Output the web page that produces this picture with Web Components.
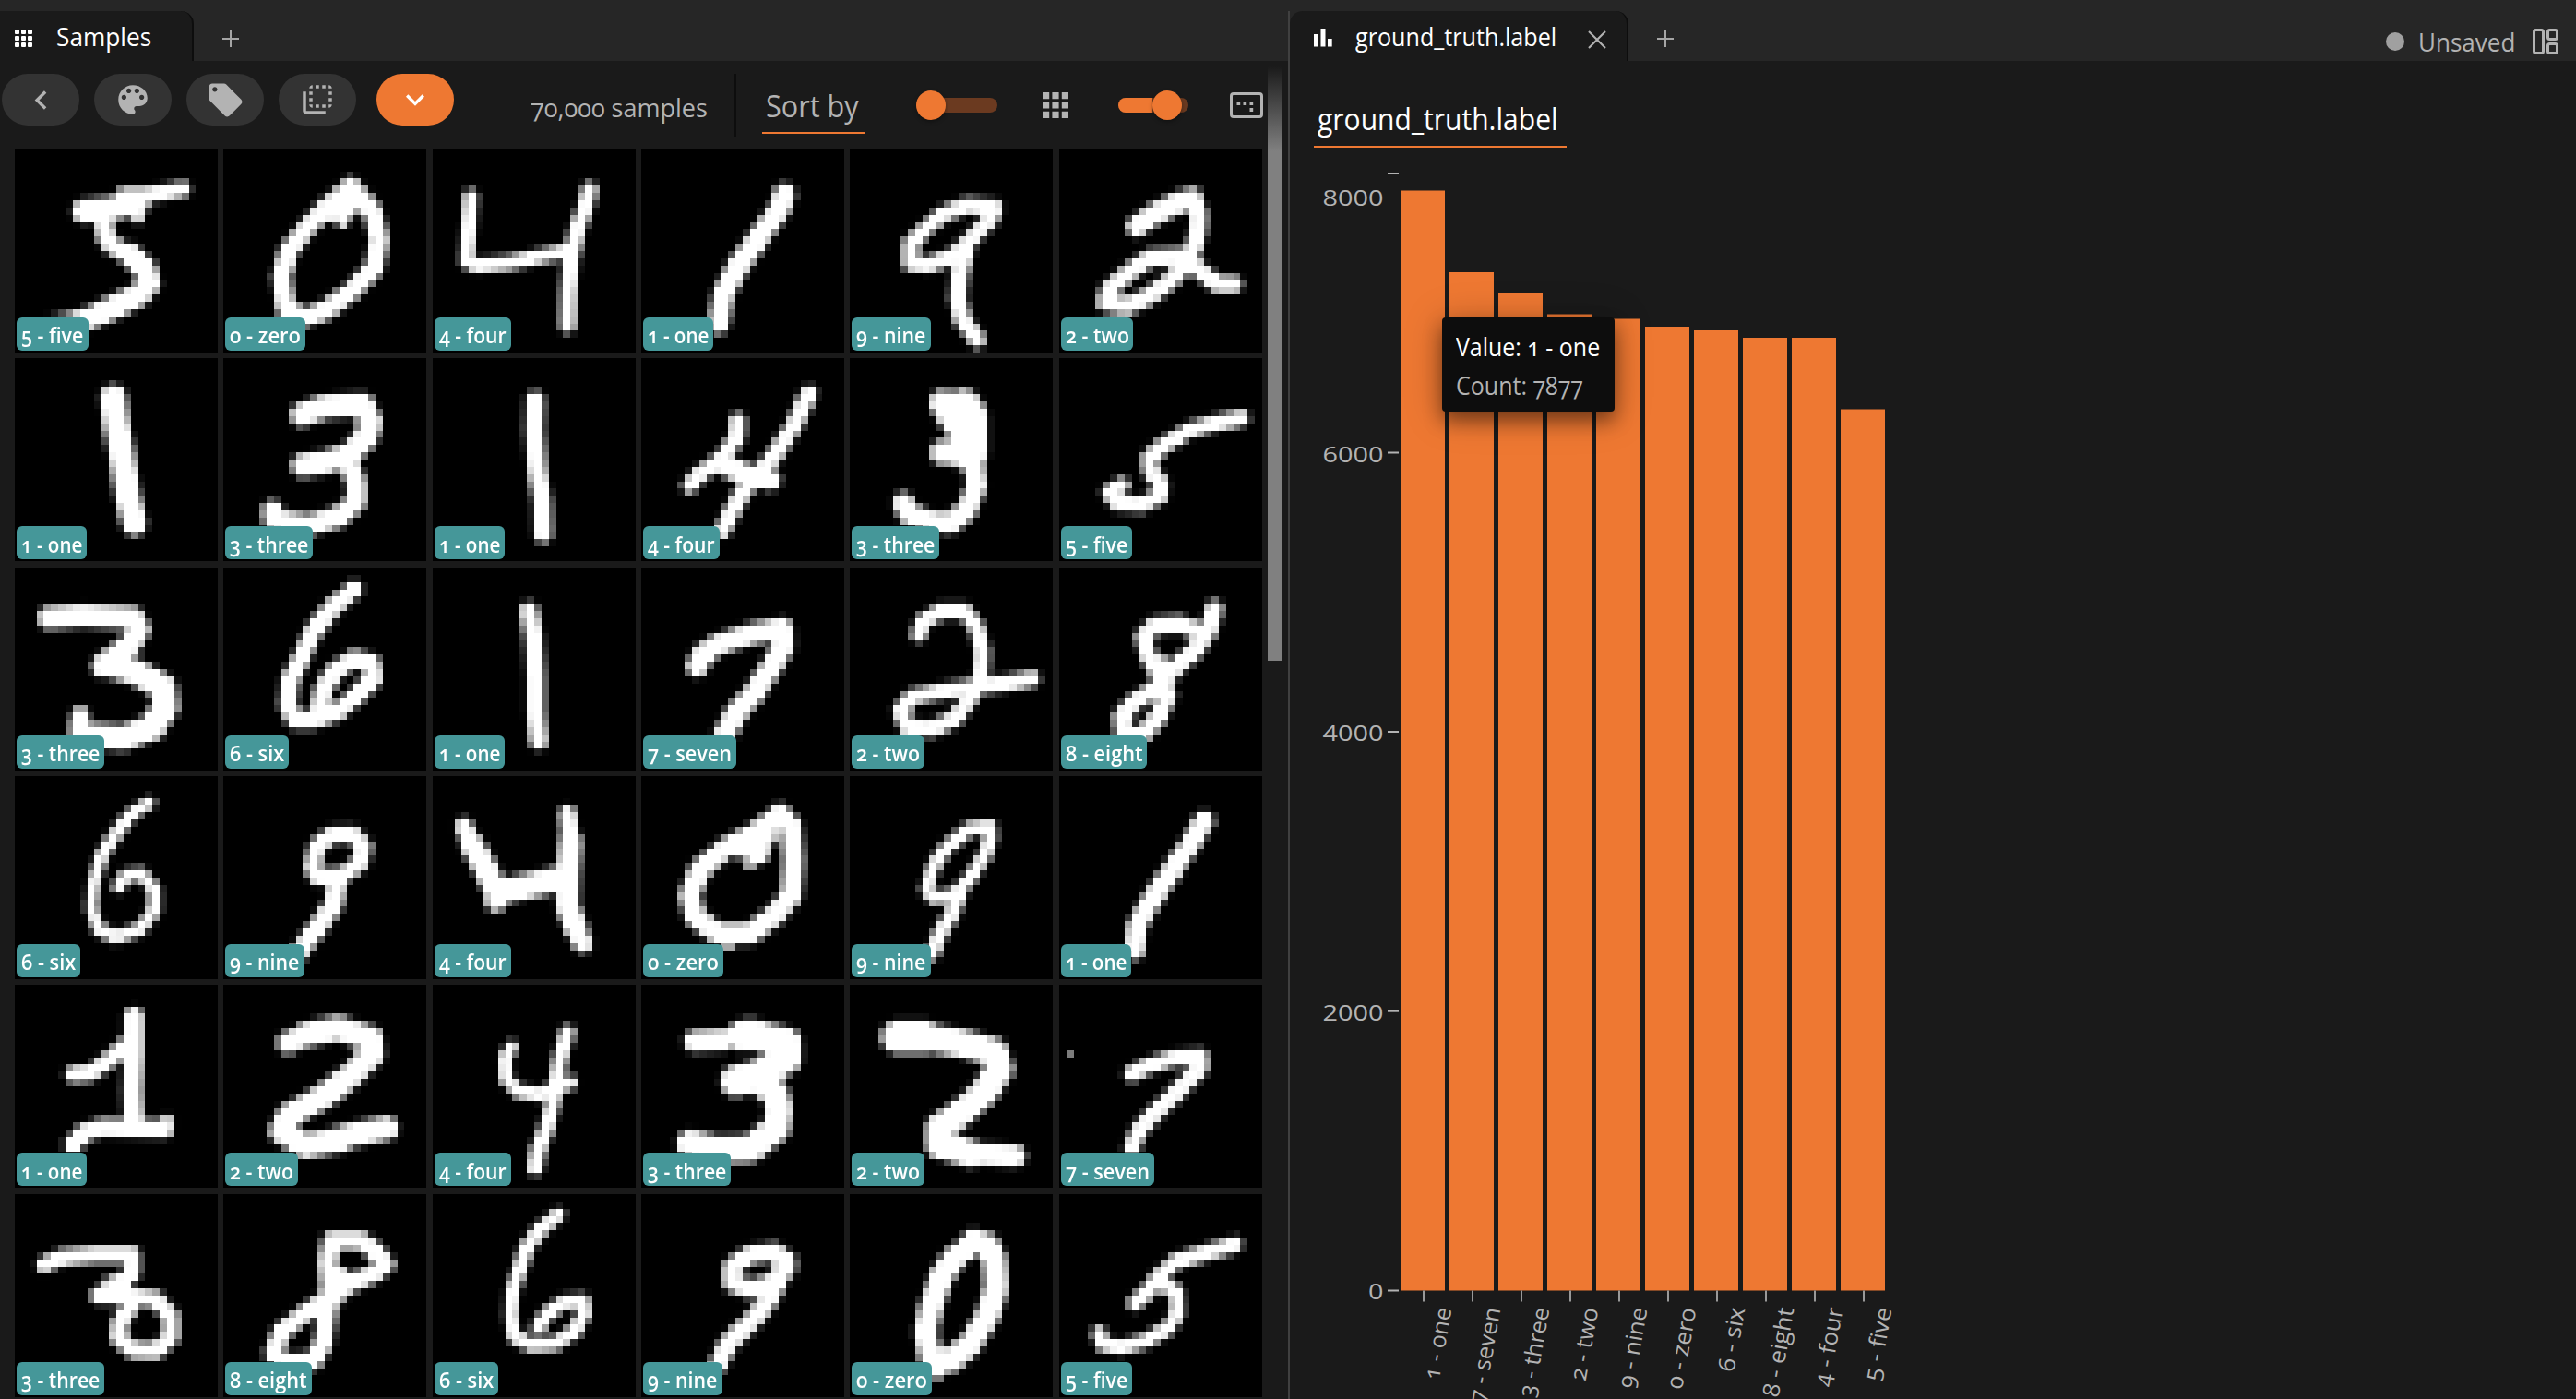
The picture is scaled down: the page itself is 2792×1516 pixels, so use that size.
<!DOCTYPE html>
<html lang="en">
<head>
<meta charset="utf-8">
<title>Samples</title>
<style>
html,body{margin:0;height:100%;background:#1a1a1a;overflow:hidden}
body{font-family:"Open Sans","Noto Sans",sans-serif;font-variant-numeric:oldstyle-nums;color:#b3b3b3}
</style>
</head>
<body>
<app-shell></app-shell>
<script>
const define=(name,html,setup)=>{
  const t=document.createElement('template');t.innerHTML=html;
  customElements.define(name,class extends HTMLElement{
    connectedCallback(){
      if(this.shadowRoot)return;
      const r=this.attachShadow({mode:'open'});
      r.appendChild(t.content.cloneNode(true));
      if(setup)setup(this,r);
    }
  });
};

/* Text set to an exact width: w = width, s = font size. */
define('fit-text',`<style>:host{display:block;flex:none;white-space:nowrap;line-height:1.36;overflow:visible}
span{display:inline-block;transform-origin:0 50%}</style><span></span>`,(el,r)=>{
  const s=r.querySelector('span');
  el.style.fontSize=el.getAttribute('s')+'px';
  s.textContent=el.getAttribute('t');
  const w=+el.getAttribute('w');
  el.style.width=w+'px';
  s.style.transform=`scaleX(${w/s.offsetWidth})`;
});

const ICONS={
  left:['0 0 24 24','<path d="M15.41 7.41 14 6l-6 6 6 6 1.41-1.41L10.83 12z"/>'],
  down:['0 0 24 24','<path d="M16.59 8.59 12 13.17 7.41 8.59 6 10l6 6 6-6z"/>'],
  palette:['0 0 24 24','<path d="M12 3c-4.97 0-9 4.03-9 9s4.03 9 9 9c.83 0 1.500-.67 1.500-1.500 0-.39-.15-.74-.39-1.010-.23-.26-.38-.61-.38-.99 0-.83.67-1.500 1.500-1.500H16c2.760 0 5-2.240 5-5 0-4.420-4.030-8-9-8zm-5.500 9c-.83 0-1.500-.67-1.500-1.500S5.670 9 6.500 9 8 9.670 8 10.500 7.330 12 6.500 12zm3-4C8.670 8 8 7.330 8 6.500S8.670 5 9.500 5s1.500.67 1.500 1.500S10.330 8 9.500 8zm5 0c-.83 0-1.500-.67-1.500-1.500S13.670 5 14.500 5s1.500.67 1.500 1.500S15.330 8 14.500 8zm3 4c-.83 0-1.500-.67-1.500-1.500S16.670 9 17.500 9s1.500.67 1.500 1.500-.67 1.500-1.500 1.500z"/>'],
  tag:['0 0 24 24','<path d="M21.410 11.580l-9-9C12.050 2.220 11.550 2 11 2H4c-1.100 0-2 .9-2 2v7c0 .55.22 1.050.59 1.420l9 9c.36.36.86.58 1.410.58.55 0 1.050-.22 1.410-.59l7-7c.37-.36.59-.86.59-1.410 0-.55-.23-1.060-.59-1.420zM5.500 7C4.670 7 4 6.330 4 5.500S4.670 4 5.500 4 7 4.670 7 5.500 6.330 7 5.500 7z"/>'],
  patches:['0 0 24 24','<path d="M9 7H7v2h2V7zm0 4H7v2h2v-2zm0-8c-1.110 0-2 .9-2 2h2V3zm4 12h-2v2h2v-2zm6-12v2h2c0-1.100-.9-2-2-2zm-6 0h-2v2h2V3zM9 17v-2H7c0 1.100.89 2 2 2zm10-4h2v-2h-2v2zm0-4h2V7h-2v2zm0 8c1.100 0 2-.9 2-2h-2v2zM5 7H3v12c0 1.100.89 2 2 2h12v-2H5V7zm10-2h2V3h-2v2zm0 12h2v-2h-2v2z"/>'],
  apps:['0 0 28 28','<path d="M0 0h7.200v7.200H0zM10.400 0h7.200v7.200h-7.200zM20.800 0H28v7.200h-7.200zM0 10.400h7.200v7.200H0zM10.400 10.400h7.200v7.200h-7.200zM20.800 10.400H28v7.200h-7.200zM0 20.800h7.200V28H0zM10.400 20.800h7.200V28h-7.200zM20.800 20.800H28V28h-7.200z"/>'],
  appsround:['0 0 19 19','<g><rect width="5" height="5" rx="1"/><rect x="7" width="5" height="5" rx="1"/><rect x="14" width="5" height="5" rx="1"/><rect y="7" width="5" height="5" rx="1"/><rect x="7" y="7" width="5" height="5" rx="1"/><rect x="14" y="7" width="5" height="5" rx="1"/><rect y="14" width="5" height="5" rx="1"/><rect x="7" y="14" width="5" height="5" rx="1"/><rect x="14" y="14" width="5" height="5" rx="1"/></g>'],
  bars:['0 0 20 20','<path d="M0 6h5v13.500H0zM7.500 0h5v19.500h-5zM15 11h4.700v8.500H15z"/>'],
  plus:['0 0 20 20','<path d="M9 1h2v8h8v2h-8v8H9v-8H1V9h8z"/>'],
  close:['0 0 20 20','<path d="M1 1 19 19M19 1 1 19" stroke="currentColor" stroke-width="2.100" fill="none"/>'],
  board:['0 0 28 28','<g fill="none" stroke="currentColor" stroke-width="3"><rect x="1.500" y="1.500" width="10" height="25" rx="2"/><rect x="16.500" y="1.500" width="10" height="10" rx="2"/><rect x="16.500" y="16.500" width="10" height="10" rx="2"/></g>'],
  fit:['0 0 36 28','<rect x="1.500" y="1.500" width="33" height="25" rx="2.500" fill="none" stroke="currentColor" stroke-width="3"/><path d="M7.500 10h3.700v4H7.500zM14.500 10h3.700v4h-3.700zM21.500 10h3.700v4h-3.700zM21.500 17h3.700v4h-3.700z"/>']
};
define('ui-icon',`<style>:host{display:block;flex:none}svg{display:block;width:100%;height:100%;fill:currentColor}</style>`,(el,r)=>{
  const [vb,body]=ICONS[el.getAttribute('name')];
  el.style.width=el.getAttribute('w')+'px';
  el.style.height=(el.getAttribute('h')||el.getAttribute('w'))+'px';
  r.innerHTML+=`<svg viewBox="${vb}" preserveAspectRatio="none">${body}</svg>`;
});

define('pill-button',`<style>:host{display:flex;flex:none;width:84px;height:56px;border-radius:28px;background:#333;color:#b3b3b3;align-items:center;justify-content:center}
:host([primary]){background:#ee7832;color:#fff}</style><slot></slot>`);

define('range-toggle',`<style>:host{display:flex;flex:none;height:32px;align-items:center;--on:0px}
.t{height:16px;border-radius:8px;background:#6b3a20;display:flex;align-items:center;flex:1}
.f{height:16px;border-radius:8px 0 0 8px;background:#ee7832;width:var(--on)}
.k{width:32px;height:32px;border-radius:50%;background:#ee7832;flex:none;box-shadow:0 2px 4px rgba(0,0,0,.35)}</style>
<div class="t"><div class="f"></div><div class="k"></div></div>`);

define('panel-tab',`<style>:host{display:flex;flex:none;box-sizing:border-box;height:54px;background:#1a1a1a;border-radius:0 14px 0 0;border-right:2px solid #0d0d0d;align-items:center;padding-top:4px;color:#fff;font-weight:500}
:host([round]){border-radius:14px 14px 0 0}</style><slot></slot>`);

/* Handwritten digits as strokes on a 28x28 grid: "width:x,y x,y ..." */
const INK={
a5:'3:9.5,8.5 13,8.2 17,7.3|1.8:15,6.300 18,6.300 21,5.900 23.2,5.500|1.500:17,9.300|2.200:12.2,9 12.600,12 13.500,13.300 15.700,14.500|2.900:15.900,14.500 18,16.500 18.500,18.500 17.200,20 14.300,21.400 11,23 8,24 5,24.600',
a0:'2.300:17.500,5 19.300,7 20.600,8.500 21.500,12.500 20.800,16.300 18,19.300 14,22.200 11.200,23.200 8.600,21.800 8,17.500 9,14 11.200,11.200 14,8.200 17,5.700|3:15.500,8 17.200,6.700|3:14.500,8.300 17,8|1.500:16.400,10',
a4:'1.700:5.300,6.500 5,11 4.700,15.300 6,16 10.700,15.600 15.300,14.600 19,13.900|1.900:21.600,5.600 21,8 19.900,11.200 19,15.400 18.700,19.700 18.600,24.300',
b1:'2.700:19.800,6.200 19.200,8 16.700,11.500 13.200,16.300 11.300,20 10.700,24',
a9:'1.900:20,8 16.100,7.700 12.900,8.900 10.400,11 8.400,13 8.400,15.700 11,15.900 14.400,14.600 16.900,12.200 19.400,9.600 20,8|2.100:15.900,14.200 15.200,17 14.900,20.500 15.600,23.600 17.600,26.200',
a2:'2.700:10.700,10.600 12.800,9.100 16,7.500 17.500,7|2.100:17,7 18.500,6.500 19.300,8.800 19.200,11.200 18.600,13.500 17.300,15.900 15,18.400 12,20.500 9.200,21.600 6.400,21.100 6.900,19.300 9.700,16.800 12.600,14.900 17.200,14.700 19.600,16.800 21.800,18.600 24.200,18.600',
c1:'3.200:13.600,5.400 14,9 14.800,13.400 15.600,19 16.500,22.800',
c3:'2.900:10.800,7.800 14,6.700 19.200,6.400 20.300,8.800 19.700,11 17.400,13.300 14,14.400 10.900,14.800|2.600:17.400,14.800 18.300,17.200 18.300,19.800 15.900,21.900 12,23 7,22.400 6.800,21',
d1:'2.200:14.100,5.800 14,10 14.400,15.500 15.100,19.800 15.200,24.300',
b4:'1.900:13.300,8.600 13.200,10.900 11.200,13.800 8,16 6.700,17.600|2.700:11,14.500 14.400,16 17.800,16.800|2:23.100,4.900 21.200,9 19,12.600 16.600,15.500 14,18.500 12.300,21.500 11.200,23.800',
d3:'3.400:12.900,6.200 14.800,9.300|5:15.600,6.900 16.400,8 16.400,13|3:12.800,13 14.500,13|2.600:17,13.500 17.500,17.600 16.100,21 13.800,22.800 11,22.500 8.200,21.500 7.400,20',
b5:'1.900:25.200,8.200 21.800,8.900 17.800,10 14.500,12 12.400,13.800 12.600,15.600 14,17.200 13.900,19 11.500,20.200 8,20 6.900,18.500 8.600,17.500',
e3:'2.800:4.700,6.900 9.300,6.600 16.300,6.900 17.200,8.500 16,10.500 13.500,12.500 12.100,13.600|3.300:13,13.300 16.700,14.400 20.500,16.500 20.800,19.300 19,22 15,23.500 10.500,23.200|2.300:8.700,22.200 9,20.500',
a6:'2.200:18,3 15.200,5.300 12.400,8.800 10.900,12.200 9.200,15.500 8.900,19 9.900,21 12.400,21 15.800,19.800 18.600,17.500 20.700,15.200 20.400,13.200 18,12.600 15.300,14.300 13.800,16.800 13.300,19.500',
e1:'2.100:13.300,5.900 13.900,9.500 14.200,15 14.200,20 14.600,24',
a7:'2.700:7.700,13.600 8.500,12 10.400,10.700 15,9.200 19.500,8.400 19.600,11 17.900,13.800 15.400,17.500 13,20.200 11.200,23.500',
b2:'1.900:9.500,9.200 10.100,7.400 12.700,6 15.800,6 17.600,8.300 18.300,11.700 18.100,15 16.700,18 14.400,20.900 11.500,22.200 8,22 7,19.800 8.600,17.800 13.200,17 18.400,16.300 21.900,15.900 25.200,15.300',
a8:'2.100:21.400,5.700 20.600,8.700 19,11.200 16,13.800 13.200,16.800 10.300,18.500 8.600,20.600 8.900,23 11.500,23 13.700,20.600 15,17.600 13.800,14.600 12.300,12.200 11.600,9.500 13.200,8 16.700,7.800 19,8.700|2.300:14,13.500 14,16',
b6:'1.500:18.500,3.700 15.900,5.400 13.600,8.400 11.900,11.300 10.900,14.700 10.600,18.200 11.500,21 13.900,22.200 17.300,21.100 19.300,18.500 19.300,15.600 17.500,13.500 15.300,13.700 14.300,15.200',
b9:'2:18.900,12 19.400,9.700 17.900,8 14.900,8.100 12.900,9.700 12.300,12.600 13,13.900 16.400,13.700 18.600,12.200|2.300:15.700,14 15.200,17.700 13.500,20.200 11.200,23.200 10.500,24.300',
d4:'2.200:4.300,7 5.500,9.500|3:5.500,9.500 7.600,13.400 9,16.400|2.600:8.700,17.300|3.200:9,16 14.200,14.900 18.100,14|2.100:18.600,5.200 18.900,8.500|2.900:19,9 18.700,13.500 18.600,18 19.800,21|2.400:19.800,21 20.700,23',
b0:'2.600:19.200,5.200 20.700,7 21,11.800 20.700,16.500 18.400,19.200 15,21.700 10.500,21.700 7.400,19.400 6.700,16.400 8,13 11.500,10 15.500,8 18.400,5.900|3.400:13.500,9.500 17,8|3:15.500,9 16.200,10.500|1.500:15,12|2:12,22.700',
c9:'1.600:19.300,7 16.400,7.300 13.500,9.700 11.500,12.600 10.600,15.600 11.600,16.800 14.400,16.400 16.700,13.900 18.700,10.900 19.400,8.400 19.300,7|1.700:15.200,16 14.100,19 12.400,21.900 11.300,24.600',
f1:'2.500:20,6.200 17.800,9.800 15.200,13.500 12.600,17.300 10.700,20.700 10.400,24',
g1:'2.500:16.400,4.400 16.400,9.200 16.200,14.700 16.400,19|2:8,12.400 10.500,12.200 12.800,10.600 15.300,8.300|2.200:8,22 9.500,20.400 12.200,19.700 20.700,19.900|1.600:21,18.900',
c2:'2.700:8.900,8 11.300,7|3.100:11.300,6.900 15.800,6 20.300,7.400 20.500,9.600 17.500,12.600 13.500,15.600 9.200,17.900 8,20.200 11.300,22.200 16.400,21.300|3:16.400,21 22.500,19.800',
e4:'1.600:10.900,8.600 10,10 10.100,13 11.900,14.700 14.700,15.100 17.500,14 19,13.500|1.800:18.600,6.600 17.600,10 16.700,15.600 15.700,19.800 14.500,22.800 14.100,25.300',
g3:'2.600:7.300,7.800 11.500,7.600|3.900:14,7 15,6.800 20,8 20,10.300 16,12.500 13,13.300|3.500:16,13 18.500,15 19,17 18.700,19.800 15,22.600 10.300,22.700 6.800,21.900',
d2:'4.200:6.600,7.200 10.400,7.200|3.500:10.400,7.200 15.500,8.100 20,9.300 20.700,11.700 18.400,15 15,17.900 12.300,19.800 12.300,22 16.700,23.300|2.700:16.700,23.300 22.800,23.600',
b7:'2:10,12.300 12,11.300 15.500,10.200 19.500,9.900 19.500,11.500 16.700,14.300 13.200,17.700 10.900,20.200 10,22.500|.5:1.500,9.500',
h3:'2:4,9.800 6.500,8.700 11,8.300 16.200,8.300 16.200,10.900 13.800,13 11.500,14|2.200:13.500,12.500 15,13.500|2:11.500,14 15.600,14.100 19.500,14.500 21.500,16.800 21.500,19.800 19.500,21.600 16.200,21.500 14.300,19.800 14.500,17.600 16,15.500',
b8:'2.200:14.900,6.400 19,6.400 21,7.900 22.400,9.700 20.900,10.900 17.500,12.400 14.500,14.300 11.300,16.400 8,19 6.900,21.900 8.400,23.200 12.400,23 13.800,20.600 14.300,16.400 14.700,13 14.400,9.200 14.900,6.400|3:16,11.700 15,14',
c6:'1.700:17.300,2.800 14.700,5 13,7.300 12,10.400 11,13.400 10.800,16.800 11.200,19.600 13.600,20.800 17,20.600 19.600,18.900 20.900,16.400 20.700,14.700 18.100,14.900 15.800,16.400 14.600,18.300',
d9:'2.200:20.200,9.200 18.400,7.900 15,8.300 12.500,10 12.500,12.200 15,13.100 17.800,12.400 20.100,10.400|2.400:19.500,9.500|2.300:18.900,12 17.200,15.200 15,17.700 12,20.600 10.600,23.400',
c0:'3:17,6.500 19,7 20,9 20.200,13 19,16.800 16.700,20.600 13.800,23 11.200,22.700 10.500,19 11.200,15.500 12.700,11.300 14.500,8.700|3:16,7.500|2:12,24.500',
c5:'1.900:24.300,6.900 20.700,7.900 16,9.300 13.900,11.300 12.300,13.400 10.400,15|1.700:13.800,12.200 16.200,13.500 16.300,16.400 15,18.500 12.100,20.200 8.500,21.100 6,20.700 5.500,19.200'
};
define('sample-tile',`<style>:host{display:flex;width:220px;height:220px;position:relative;background:#000}
canvas{width:220px;height:220px;image-rendering:pixelated;display:block}
.b{position:absolute;left:2px;bottom:2px;height:36px;box-sizing:border-box;padding:3px 5px 0;background:#459799;border-radius:6px;color:#fff;display:flex;align-items:center;font-weight:600}</style>
<canvas width="28" height="28"></canvas><div class="b"></div>`,(el,r)=>{
  const W={one:76,two:78.6,three:95,four:83,five:77.500,six:69,seven:101,eight:93.500,nine:85.500,zero:87};
  const label=el.getAttribute('label');
  r.querySelector('.b').innerHTML=`<fit-text t="${label}" s="24" w="${W[label.slice(4)]-10}"></fit-text>`;
  const segs=[];
  for(const part of INK[el.getAttribute('ink')].split('|')){
    const [w,p]=part.split(':'),pts=p.split(' ').map(q=>q.split(',').map(Number));
    if(pts.length===1)pts.push(pts[0]);
    for(let i=1;i<pts.length;i++)segs.push([(+w+.2)/2,...pts[i-1],...pts[i]]);
  }
  const cx=r.querySelector('canvas').getContext('2d'),im=cx.createImageData(28,28);
  for(let y=0;y<28;y++)for(let x=0;x<28;x++){
    let sum=0;
    for(let a=0;a<4;a++)for(let b=0;b<4;b++){
      const px=x+(a+.5)/4,py=y+(b+.5)/4;let v=0;
      for(const [h,x1,y1,x2,y2] of segs){
        const dx=x2-x1,dy=y2-y1,l=dx*dx+dy*dy;
        const t=l?Math.max(0,Math.min(1,((px-x1)*dx+(py-y1)*dy)/l)):0;
        v=Math.max(v,Math.min(1,Math.max(0,(h-Math.hypot(px-x1-t*dx,py-y1-t*dy))*2+.5)));
      }
      sum+=v;
    }
    const g=Math.min(255,sum/16*275),i=(y*28+x)*4;
    im.data[i]=im.data[i+1]=im.data[i+2]=g;im.data[i+3]=255;
  }
  cx.putImageData(im,0,0);
});

define('sample-grid',`<style>:host{display:grid;grid-template-columns:repeat(6,220px);grid-auto-rows:220px;gap:6.360px;padding-left:16px}</style>`,(el,r)=>{
  const N=['zero','one','two','three','four','five','six','seven','eight','nine'];
  const order='a5 a0 a4 b1 a9 a2 c1 c3 d1 b4 d3 b5 e3 a6 e1 a7 b2 a8 b6 b9 d4 b0 c9 f1 g1 c2 e4 g3 d2 b7 h3 b8 c6 d9 c0 c5';
  r.innerHTML+=order.split(' ').map(k=>`<sample-tile ink="${k}" label="${k[1]} - ${N[k[1]]}"></sample-tile>`).join('');
});

define('tool-bar',`<style>:host{display:flex;height:96px;box-sizing:border-box;align-items:flex-start;color:#b3b3b3;padding-top:14px}
:host>*{flex:none}
pill-button{margin:0 16px 0 0}
.n{margin:17px 0 0 83px}
.v{width:2px;height:68px;background:#0d0d0d;margin:0 0 0 29px}
.s{margin-left:28px;border-bottom:2px solid #ee7832;height:63px;display:flex;padding-left:4px;width:108px}</style>
<pill-button style="margin-left:2px"><ui-icon name="left" w="41"></ui-icon></pill-button>
<pill-button><ui-icon name="palette" w="42"></ui-icon></pill-button>
<pill-button><ui-icon name="tag" w="43"></ui-icon></pill-button>
<pill-button style="margin-right:22px"><ui-icon name="patches" w="42"></ui-icon></pill-button>
<pill-button primary style="margin-right:0"><ui-icon name="down" w="40"></ui-icon></pill-button>
<fit-text class="n" t="70,000 samples" s="28" w="192"></fit-text>
<div class="v"></div>
<div class="s"><fit-text t="Sort by" s="33" w="101" style="margin-top:13px"></fit-text></div>
<range-toggle style="width:88px;margin:18px 0 0 55px"></range-toggle>
<ui-icon name="apps" w="28" style="margin:20px 0 0 49px"></ui-icon>
<range-toggle style="width:76px;margin:18px 0 0 54px;--on:37px"></range-toggle>
<ui-icon name="fit" w="36" h="28" style="margin:20px 0 0 45px"></ui-icon>`);

define('samples-panel',`<style>:host{display:flex;flex-direction:column;width:1396px;height:1504px;flex:none}
.tabs{display:flex;height:54px;background:#262626;flex:none}
.main{display:flex;flex:1;min-height:0}
.c{width:1374px;flex:none;min-width:0}
.bar{width:16px;height:644px;margin-top:6px;flex:none;background:linear-gradient(#1a1a1a,#808080 92px)}
.w{width:16px;display:flex}</style>
<div class="tabs"><panel-tab style="width:210px"><ui-icon name="appsround" w="19" style="margin-left:16px"></ui-icon><fit-text t="Samples" s="27" w="103" style="margin:-1px 0 0 26px"></fit-text></panel-tab>
<ui-icon name="plus" w="20" style="margin:20px 0 0 30px;color:#a5a5a5"></ui-icon></div>
<div class="main"><div class="c"><tool-bar></tool-bar><sample-grid></sample-grid></div><div class="w"><div class="bar"></div></div></div>`);

define('bar-chart',`<style>:host{display:block;position:relative;width:1394px;height:1340px;overflow:hidden}
svg{display:block}text{fill:#b3b3b3}
.tip{position:absolute;left:165px;top:168px;width:187px;height:102px;box-sizing:border-box;background:#0d0d0d;border-radius:4px;padding:14px 15px 0;box-shadow:0 10px 20px rgba(0,0,0,.42),0 4px 40px rgba(0,0,0,.25);color:#b3b3b3}</style>
<div class="g"></div>
<div class="tip"><fit-text t="Value: 1 - one" s="27" w="156" style="color:#fff;font-weight:500"></fit-text><fit-text t="Count: 7877" s="27" w="138" style="margin-top:5px"></fit-text></div>`,(el,r)=>{
  /* Origin of the drawing is (1398,176) on the page. */
  const B=[['1 - one',206.500,79],['7 - seven',295,104],['3 - three',318,98],['2 - two',340.500,80],['9 - nine',345.500,88],['0 - zero',354,89],['6 - six',358,70],['8 - eight',366,98],['4 - four',366,86],['5 - five',443.500,80]];
  let s='<svg width="1394" height="1340" viewBox="1398 176 1394 1340" font-family="Open Sans,Noto Sans,sans-serif">';
  B.forEach(([n,y,l],i)=>{
    const x=1518+53*i,t=x+25;
    s+=`<rect x="${x}" y="${y}" width="48" height="${1398.500-y}" fill="#ee7832"/><rect x="${t-1}" y="1398.500" width="2" height="12" fill="#999"/>
<text transform="translate(${t+30.500},1418.500) rotate(-80)" text-anchor="end" font-size="25" textLength="${l}" lengthAdjust="spacingAndGlyphs">${n}</text>`;
  });
  [['8000',188.500,223],['6000',490.500,500.500],['4000',793,803],['2000',1095.700,1105.500],['0',1398.500,1408]].forEach(([n,y,b])=>{
    const w=n==='0'?16.500:66;
    s+=`<rect x="1504" y="${y-(n==='8000'?.5:1)}" width="12" height="${n==='8000'?1:2}" fill="#b3b3b3"/><text x="${1499.500-w}" y="${b}" font-size="24" style="font-variant-numeric:lining-nums" textLength="${w}" lengthAdjust="spacingAndGlyphs">${n}</text>`;
  });
  r.querySelector('.g').innerHTML=s+'</svg>';
});

define('histogram-panel',`<style>:host{display:flex;flex-direction:column;width:1394px;height:1504px;flex:none}
.tabs{display:flex;height:54px;background:#262626;flex:none}
.h{height:110px;flex:none;display:flex;padding-left:26px}
.t{width:270px;padding-left:4px;height:92px;border-bottom:2px solid #ee7832}
.u{margin:20px 0 0 auto;padding-right:19px;display:flex;color:#b3b3b3;align-items:flex-start}
.d{width:20px;height:20px;border-radius:50%;background:#a0a0a0;margin-top:3px}</style>
<div class="tabs"><panel-tab round style="width:367px"><ui-icon name="bars" w="20" style="margin-left:26px"></ui-icon><fit-text t="ground_truth.label" s="27" w="218" style="margin:-1px 0 0 25px"></fit-text><ui-icon name="close" w="20" style="margin:4px 0 0 34px;color:#b3b3b3"></ui-icon></panel-tab>
<ui-icon name="plus" w="20" style="margin:20px 0 0 30px;color:#a5a5a5"></ui-icon>
<div class="u"><div class="d"></div><fit-text t="Unsaved" s="28" w="105" style="margin:-6px 0 0 15px"></fit-text><ui-icon name="board" w="28" style="margin:-1px 0 0 19px"></ui-icon></div></div>
<div class="h"><div class="t"><fit-text t="ground_truth.label" s="32" w="261" style="color:#fff;font-weight:500;margin-top:41px"></fit-text></div></div>
<bar-chart></bar-chart>`);

define('app-shell',`<style>:host{display:flex;flex-direction:column;width:2792px;height:1516px;overflow:hidden;background:#1a1a1a}
.top{height:12px;background:#262626;flex:none}
.row{display:flex;flex:1;min-height:0}
.div{width:2px;background:#404040;flex:none}</style>
<div class="top"></div><div class="row"><samples-panel></samples-panel><div class="div"></div><histogram-panel></histogram-panel></div>`);
</script>
</body>
</html>
